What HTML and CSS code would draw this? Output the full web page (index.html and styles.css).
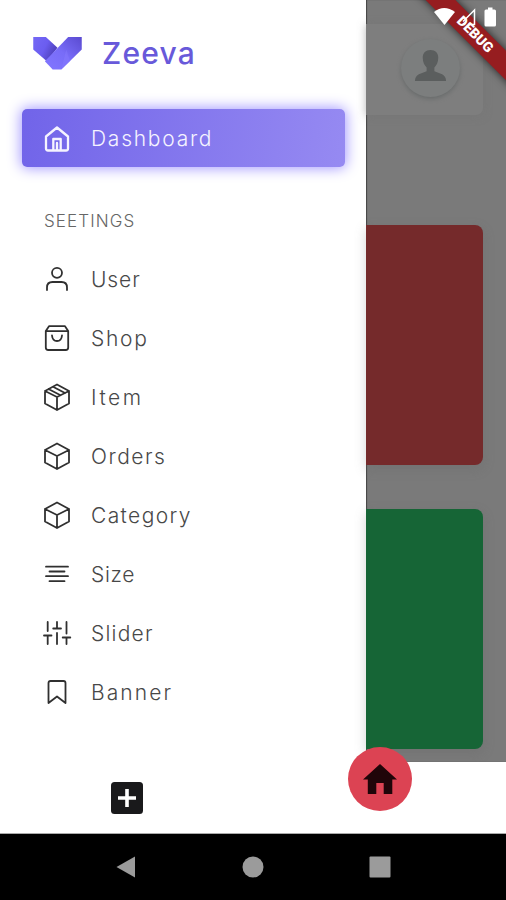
FILE: index.html
```html
<!DOCTYPE html>
<html lang="en">
<head>
<meta charset="utf-8">
<title>Zeeva</title>
<link rel="stylesheet" href="styles.css">
</head>
<body>
<div class="phone">
  <div class="main">
    <aside class="drawer">
      <header class="brand">
        <svg class="logo" viewBox="0 0 50 34">
          <defs>
            <linearGradient id="left" x1="0" y1="0" x2="1" y2=".5"><stop offset="0" stop-color="#7468f5"/><stop offset=".55" stop-color="#6b5df0"/><stop offset="1" stop-color="#4d3fb9"/></linearGradient>
            <linearGradient id="right" x1="0" y1="1" x2="1" y2="0"><stop offset="0" stop-color="#8277ff"/><stop offset=".5" stop-color="#786cf8"/><stop offset="1" stop-color="#5a4ad0"/></linearGradient>
          </defs>
          <path d="M0 0H13L25 11 14 25 0 13Z" fill="url(#left)"/>
          <path d="M36 0H50V13L29 33.5H20L12 25Z" fill="url(#right)"/>
          <path d="M34 13L38 25 29 33.5Z" fill="#8a7dff" opacity=".4"/>
        </svg>
        <h1>Zeeva</h1>
      </header>
      <a class="item active"><svg class="icon" viewBox="0 0 26 26"><path d="M2 10.5L13 1.5 24 10.5V22.5Q24 24.5 22 24.5H4Q2 24.5 2 22.5ZM9.3 24V13H16.7V24M13 17V24"/></svg><span>Dashboard</span></a>
      <h2>SEETINGS</h2>
      <nav>
        <a class="item"><svg class="icon" viewBox="0 0 26 26"><circle cx="13" cy="6.8" r="5"/><path d="M3 24V21.5Q3 16 8.5 16H17.5Q23 16 23 21.5V24"/></svg><span class="user">User</span></a>
        <a class="item"><svg class="icon" viewBox="0 0 26 26"><path d="M1.8 6L5 1.2H21L24.2 6V22.5Q24.2 25 21.7 25H4.3Q1.8 25 1.8 22.5ZM2 6.2H24M8 10.5Q8.5 16 13 16T18 10.5"/></svg><span class="shop">Shop</span></a>
        <a class="item"><svg class="icon" viewBox="0 0 26 26"><path d="M13 .5L25 7V19.5L13 26 1 19.5V7ZM1 7L13 13 25 7M13 13V26M4.5 5L16.5 11.2M9 2.7L21 9"/></svg><span class="item-name">Item</span></a>
        <a class="item"><svg class="icon" viewBox="0 0 26 26"><path d="M13 .5L25 7V19.5L13 26 1 19.5V7ZM1 7L13 13 25 7M13 13V26"/></svg><span class="orders">Orders</span></a>
        <a class="item"><svg class="icon" viewBox="0 0 26 26"><path d="M13 .5L25 7V19.5L13 26 1 19.5V7ZM1 7L13 13 25 7M13 13V26"/></svg><span class="category">Category</span></a>
        <a class="item"><svg class="icon" viewBox="0 0 26 26"><path d="M2 5.7H24M5.5 10.5H20.5M2 15.2H24M5.5 20.2H20.5"/></svg><span class="size">Size</span></a>
        <a class="item"><svg class="icon" viewBox="0 0 26 26"><path d="M3.7 2V11M3.7 15.5V24M0 15.5H7.5M13 2V8.5M9.2 8.5H17M13 13V24M22.5 2V13.5M18.7 17.5H26.3M22.5 17.5V24"/></svg><span class="slider">Slider</span></a>
        <a class="item"><svg class="icon" viewBox="0 0 26 26"><path d="M4.5 24V4Q4.5 2 6.5 2H19.5Q21.5 2 21.5 4V24L13 17.5Z"/></svg><span class="banner">Banner</span></a>
      </nav>
    </aside>
    <section class="page">
      <div class="topbar"><div class="avatar"><svg viewBox="0 0 34 34"><path d="M17 1C22 1 25 4 25 9 25 14 23 17 21 19V23L29 26Q33 28 33 33H1Q1 28 5 26L13 23V19C11 17 9 14 9 9 9 4 12 1 17 1Z"/></svg></div></div>
      <div class="card red"></div>
      <div class="card green"></div>
    </section>
  </div>
  <footer class="tabs">
    <svg class="add" viewBox="0 0 32 32"><rect width="32" height="32" rx="3.5" fill="#19191b"/><path d="M16 7V25M7 16H25" stroke="#fff" stroke-width="3.6"/></svg>
    <div class="fab"><svg viewBox="0 0 34 30"><path d="M17 0L34 15.5H29.3V30H20.7V19H13.3V30H4.8V15.5H0Z"/></svg></div>
  </footer>
  <div class="system">
    <svg viewBox="0 0 22 24"><path d="M20 1.5V22.5L1.5 12Z"/></svg>
    <svg viewBox="0 0 22 22"><circle cx="11" cy="11" r="10.5"/></svg>
    <svg viewBox="0 0 22 22"><rect x=".5" y=".5" width="21" height="21" rx="1"/></svg>
  </div>
  <svg class="status" viewBox="0 0 72 30"><path d="M0 12Q10 4 21 12L10.5 25Z"/><path class="signal" d="M29 21.5L40.5 10V24.5H34"/><path d="M52 9.5H54V7.5H58.5V9.5H60.5Q62 9.5 62 11V25Q62 26.500 60.5 26.500H52Q50.500 26.500 50.500 25V11Q50.500 9.500 52 9.500Z"/></svg>
  <div class="ribbon"><span>DEBUG</span></div>
</div>
</body>
</html>
```

FILE: styles.css
```css
* { box-sizing: border-box; }
body { margin: 0; font-family: Inter, "Open Sans", sans-serif; }
h1, h2 { margin: 0; }
svg { display: block; overflow: visible; flex: none; }
.phone { position: relative; width: 506px; height: 900px; overflow: hidden; background: #fff; display: flex; flex-direction: column; }
.main { height: 762px; display: flex; }
.drawer { width: 366px; background: #fff; padding: 36px 21px 0 22px; }
.brand { display: flex; align-items: center; gap: 20px; height: 34px; padding-left: 11px; }
.logo { width: 49px; height: 33px; }
h1 { font-size: 30px; font-weight: 500; color: #6859da; letter-spacing: 1.2px; line-height: 34px; }
.item { display: flex; align-items: center; height: 59px; padding: 1px 0 0 22px; gap: 21px; font-size: 21px; font-weight: 300; color: #484848; }
.icon { width: 26px; height: 26px; fill: none; stroke: #303030; stroke-width: 1.8; stroke-linecap: round; stroke-linejoin: round; }
.user { letter-spacing: .9px; }
.shop { letter-spacing: 1.7px; }
.item-name { letter-spacing: 2.5px; }
.orders { letter-spacing: 1.5px; }
.category { letter-spacing: 1.4px; }
.size { letter-spacing: .7px; }
.slider { letter-spacing: 1.2px; }
.banner { letter-spacing: 2.1px; }
.active { height: 58px; margin-top: 39px; border-radius: 5px; color: #f5f3ff; background: linear-gradient(100deg, #7164e9, #968af2); box-shadow: 0 0 14px 1px #a095ff; letter-spacing: 1.75px; }
.active .icon { stroke: #f5f3ff; stroke-width: 2.3; }
h2 { margin: 43px 0 0 22px; height: 22px; line-height: 22px; font-size: 17px; font-weight: 300; letter-spacing: 1.1px; color: #666; }
nav { padding-top: 17px; }
.page { width: 140px; padding: 24px 23px 0 0; background: #7a7a7a; box-shadow: inset 1px 0 1px #444; }
.topbar { height: 91px; border-radius: 0 7px 7px 0; background: #7e7e7e; box-shadow: 0 1px 9px #74747488; display: flex; justify-content: flex-end; padding: 15px 23px; }
.avatar { width: 59px; height: 58px; border-radius: 50%; background: #7c7e7e; box-shadow: 0 2px 4px #696c6c; padding: 10px 13px; }
.avatar svg { width: 33px; height: 33px; fill: #5b5e5e; }
.card { height: 240px; border-radius: 0 8px 8px 0; box-shadow: 0 4px 12px #60606044; }
.red { margin-top: 110px; background: #752a2b; }
.green { margin-top: 44px; background: #166536; }
.tabs { height: 72px; display: flex; align-items: flex-start; padding-left: 111px; border-bottom: 1px solid #aaa; background: #fff; z-index: 1; }
.add { width: 32px; height: 32px; margin-top: 20px; }
.fab { width: 64px; height: 64px; margin: -15px 0 0 205px; border-radius: 50%; background: #dc4353; display: flex; align-items: center; justify-content: center; }
.fab svg { width: 34px; height: 30px; fill: #200509; }
.system { flex: 1; background: #000; display: flex; justify-content: center; align-items: center; gap: 105px; fill: #9b9b9b; }
.system svg { width: 22px; height: 24px; }
.ribbon { position: absolute; z-index: 2; width: 150px; height: 21px; left: 400px; top: 24px; transform: rotate(45deg); background: #961d20; box-shadow: 0 0 9px #222; text-align: center; color: #fff; font: 900 14px/21px Roboto, sans-serif; }
.status { position: absolute; z-index: 3; left: 434px; top: 0; width: 72px; height: 30px; fill: #fff; }
.status .signal { fill: none; stroke: #fff; stroke-width: 1.5; }
```
